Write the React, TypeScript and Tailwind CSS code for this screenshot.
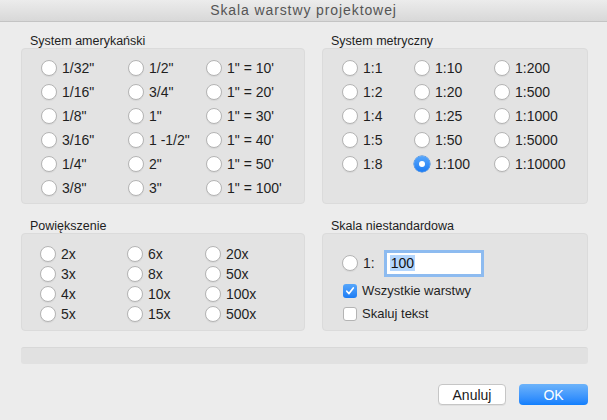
import React from 'react';

const font = { fontFamily: '"Liberation Sans", Arial, sans-serif' };

const Radio: React.FC<{ label: string; on?: boolean }> = ({ label, on }) => (
  <div className="flex items-center gap-[5px]">
    {on ? (
      <span className="flex h-[16px] w-[16px] items-center justify-center rounded-full bg-gradient-to-b from-[#56a6fb] to-[#1a7cf4] shadow-[0_0_0_0.5px_#1f73d8]">
        <span className="h-[6px] w-[6px] rounded-full bg-white" />
      </span>
    ) : (
      <span className="h-[16px] w-[16px] rounded-full border border-[#b4b4b4] bg-white shadow-[0_1px_1px_rgba(0,0,0,0.06)]" />
    )}
    <span className="text-[14px] leading-none text-[#1f1f1f]">{label}</span>
  </div>
);

const Grupa: React.FC<{ tytul: string; children: React.ReactNode; className?: string }> = ({ tytul, children, className }) => (
  <div className={`flex flex-col ${className ?? ''}`}>
    <div className="h-[14px] pl-[9px] text-[12.5px] leading-[14px] text-[#1e1e1e]">{tytul}</div>
    <div className="flex-1 rounded-[4px] border border-[#dbdbdb] bg-[#e3e3e3]">{children}</div>
  </div>
);

const amerykanski = [
  ['1/32"', '1/2"', "1\" = 10'"],
  ['1/16"', '3/4"', "1\" = 20'"],
  ['1/8"', '1"', "1\" = 30'"],
  ['3/16"', '1 -1/2"', "1\" = 40'"],
  ['1/4"', '2"', "1\" = 50'"],
  ['3/8"', '3"', "1\" = 100'"],
];

const metryczny = [
  ['1:1', '1:10', '1:200'],
  ['1:2', '1:20', '1:500'],
  ['1:4', '1:25', '1:1000'],
  ['1:5', '1:50', '1:5000'],
  ['1:8', '1:100', '1:10000'],
];

const powiekszenie = [
  ['2x', '6x', '20x'],
  ['3x', '8x', '50x'],
  ['4x', '10x', '100x'],
  ['5x', '15x', '500x'],
];

const Checkbox: React.FC<{ label: string; on?: boolean }> = ({ label, on }) => (
  <div className="flex h-[23px] items-center gap-[5px] pl-[20px]">
    {on ? (
      <span className="flex h-[14px] w-[14px] items-center justify-center rounded-[3px] bg-gradient-to-b from-[#56a6fb] to-[#1a7cf4]">
        <svg width="10" height="10" viewBox="0 0 10 10">
          <path d="M1.8 5.2 L4 7.6 L8.3 2" fill="none" stroke="white" strokeWidth="1.7" strokeLinecap="round" strokeLinejoin="round" />
        </svg>
      </span>
    ) : (
      <span className="h-[14px] w-[14px] rounded-[3px] border border-[#b4b4b4] bg-white" />
    )}
    <span className="text-[13px] leading-none text-[#1f1f1f]">{label}</span>
  </div>
);

export default function App() {
  return (
    <div className="flex h-[420px] w-[607px] flex-col bg-[#ececec]" style={font}>
      <div className="flex h-[22px] items-center justify-center border-b border-[#c4c4c4] bg-gradient-to-b from-[#ececec] to-[#d8d8d8] text-[14px] tracking-[0.9px] text-[#555555]">
        Skala warstwy projektowej
      </div>

      <div className="flex flex-1 flex-col pl-[21px] pr-[19px] pt-[12px]">
        <div className="flex gap-[17px]">
          <Grupa tytul="System amerykański" className="w-[284px]">
            <div className="grid grid-cols-[87px_78px_1fr] pl-[19px] pt-[7px] pb-[3px]">
              {amerykanski.flat().map((l) => (
                <div key={l} className="flex h-[24px] items-center">
                  <Radio label={l} />
                </div>
              ))}
            </div>
          </Grupa>
          <Grupa tytul="System metryczny" className="w-[266px]">
            <div className="grid grid-cols-[72px_80px_1fr] pl-[19px] pt-[7px]">
              {metryczny.flat().map((l) => (
                <div key={l} className="flex h-[24px] items-center">
                  <Radio label={l} on={l === '1:100'} />
                </div>
              ))}
            </div>
          </Grupa>
        </div>

        <div className="mt-[15px] flex gap-[17px]">
          <Grupa tytul="Powiększenie" className="w-[284px]">
            <div className="grid grid-cols-[87px_78px_1fr] pl-[18px] pt-[10px] pb-[6px]">
              {powiekszenie.flat().map((l) => (
                <div key={l} className="flex h-[20px] items-center">
                  <Radio label={l} />
                </div>
              ))}
            </div>
          </Grupa>
          <Grupa tytul="Skala niestandardowa" className="w-[266px]">
            <div className="flex flex-col pt-[15px]">
              <div className="flex h-[28px] items-center pl-[19px]">
                <Radio label="1:" />
                <div className="ml-[12px] flex h-[21px] w-[94px] items-center bg-white pl-[3px] shadow-[0_0_0_3px_#8dbbf0]">
                  <span className="bg-[#b4d6fd] px-[1px] text-[14px] leading-[16px] text-[#111]">100</span>
                </div>
              </div>
              <div className="mt-[2px]">
                <Checkbox label="Wszystkie warstwy" on />
                <Checkbox label="Skaluj tekst" />
              </div>
            </div>
          </Grupa>
        </div>

        <div className="mt-[16px] h-[17px] rounded-[3px] border-t border-[#d8d8d8] bg-[#e1e1e1]" />

        <div className="mt-[20px] flex justify-end gap-[13px]">
          <button className="h-[21px] w-[68px] rounded-[4px] border border-[#c6c6c6] bg-white text-[14px] leading-none text-[#1a1a1a] shadow-[0_1px_0_rgba(0,0,0,0.05)]">
            Anuluj
          </button>
          <button className="h-[21px] w-[69px] rounded-[4px] bg-gradient-to-b from-[#6cb3fa] to-[#0f7ffd] text-[14px] leading-none text-white">
            OK
          </button>
        </div>
      </div>
    </div>
  );
}
